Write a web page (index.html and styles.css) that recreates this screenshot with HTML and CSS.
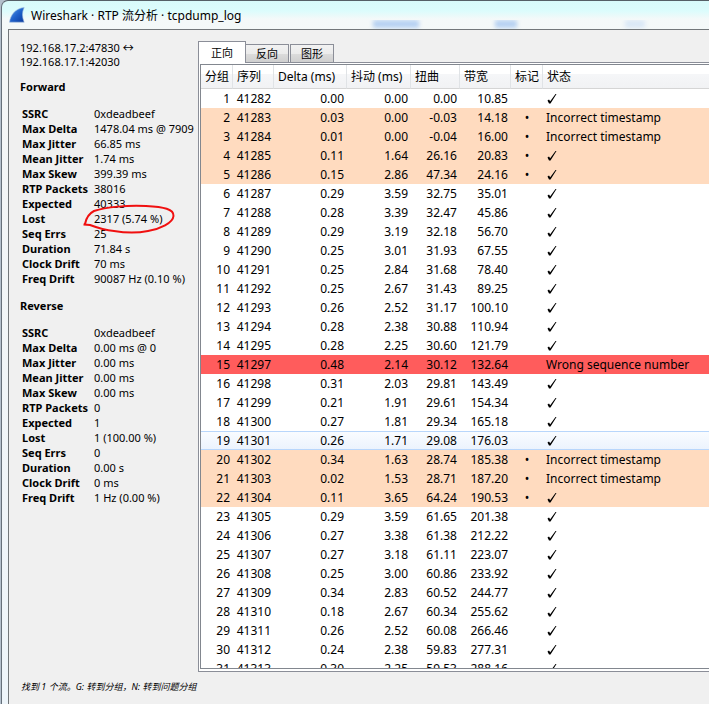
FILE: index.html
```html
<!DOCTYPE html>
<html lang="zh-CN">
<head>
<meta charset="utf-8">
<title>Wireshark · RTP 流分析 · tcpdump_log</title>
<link rel="stylesheet" href="styles.css">
</head>
<body>
<div class="window">
  <header class="titlebar">
    <svg class="fin" viewBox="0 0 16 16" aria-hidden="true">
      <defs><linearGradient id="fin" x1="0" y1="0" x2="1" y2="1"><stop offset="0" stop-color="#5aa6ea"/><stop offset=".5" stop-color="#1f62cc"/><stop offset="1" stop-color="#0a3a9c"/></linearGradient></defs>
      <path d="M.5 15.200C1.500 8 6 1.500 15.200.5C13 5 13 10 15.200 15.200Z" fill="url(#fin)" stroke="#a9c3e0" stroke-width=".6"/>
    </svg>
    <h1>Wireshark · RTP 流分析 · tcpdump_log</h1>
    <div class="ghosts" aria-hidden="true"><i></i><i></i><i></i></div>
  </header>
  <main class="client">
    <div class="panes">
      <aside class="stats">
        <p>192.168.17.2:47830 ↔<br>192.168.17.1:42030</p>
        <h2>Forward</h2>
        <table>
          <tr><th scope="row">SSRC</th><td>0xdeadbeef</td></tr>
          <tr><th scope="row">Max Delta</th><td>1478.04 ms @ 7909</td></tr>
          <tr><th scope="row">Max Jitter</th><td>66.85 ms</td></tr>
          <tr><th scope="row">Mean Jitter</th><td>1.74 ms</td></tr>
          <tr><th scope="row">Max Skew</th><td>399.39 ms</td></tr>
          <tr><th scope="row">RTP Packets</th><td>38016</td></tr>
          <tr><th scope="row">Expected</th><td>40333</td></tr>
          <tr><th scope="row">Lost</th><td class="marked">2317 (5.74 %)<svg class="ring" viewBox="0 0 100 40" aria-hidden="true"><path d="M3.500 25.500L10 26C18 29 24 31 34 32C46 34 58 34 68 32C80 30 93 24 93.500 17C94 10 84 8 66 7C48 6 26 8 14 12C8 15 6 20 5 25"/></svg></td></tr>
          <tr><th scope="row">Seq Errs</th><td>25</td></tr>
          <tr><th scope="row">Duration</th><td>71.84 s</td></tr>
          <tr><th scope="row">Clock Drift</th><td>70 ms</td></tr>
          <tr><th scope="row">Freq Drift</th><td>90087 Hz (0.10 %)</td></tr>
        </table>
        <h2>Reverse</h2>
        <table>
          <tr><th scope="row">SSRC</th><td>0xdeadbeef</td></tr>
          <tr><th scope="row">Max Delta</th><td>0.00 ms @ 0</td></tr>
          <tr><th scope="row">Max Jitter</th><td>0.00 ms</td></tr>
          <tr><th scope="row">Mean Jitter</th><td>0.00 ms</td></tr>
          <tr><th scope="row">Max Skew</th><td>0.00 ms</td></tr>
          <tr><th scope="row">RTP Packets</th><td>0</td></tr>
          <tr><th scope="row">Expected</th><td>1</td></tr>
          <tr><th scope="row">Lost</th><td>1 (100.00 %)</td></tr>
          <tr><th scope="row">Seq Errs</th><td>0</td></tr>
          <tr><th scope="row">Duration</th><td>0.00 s</td></tr>
          <tr><th scope="row">Clock Drift</th><td>0 ms</td></tr>
          <tr><th scope="row">Freq Drift</th><td>1 Hz (0.00 %)</td></tr>
        </table>
      </aside>
      <section class="tabs">
        <div class="tablist" role="tablist">
          <button class="tab active" role="tab" aria-selected="true">正向</button>
          <button class="tab" role="tab" aria-selected="false">反向</button>
          <button class="tab" role="tab" aria-selected="false">图形</button>
        </div>
        <div class="tabpanel" role="tabpanel">
          <div class="view">
            <table class="packets">
              <colgroup><col class="c-packet"><col class="c-seq"><col class="c-delta"><col class="c-jitter"><col class="c-skew"><col class="c-band"><col class="c-mark"><col></colgroup>
              <thead><tr><th>分组</th><th>序列</th><th>Delta (ms)</th><th>抖动 (ms)</th><th>扭曲</th><th>带宽</th><th>标记</th><th>状态</th></tr></thead>
              <tbody id="rows"></tbody>
            </table>
          </div>
        </div>
      </section>
    </div>
    <footer class="hint">找到 1 个流。G: 转到分组，N: 转到问题分组</footer>
  </main>
</div>
<script src="app.js"></script>
</body>
</html>
```
FILE: styles.css
```css
* { box-sizing: border-box; }
body {
  margin: 0;
  height: 100vh;
  background: #b4c0cc;
  color: #000;
  font: 12px/19px "Noto Sans", "Noto Sans CJK SC", sans-serif;
}
h1, h2, p { margin: 0; }
table { border-collapse: separate; border-spacing: 0; }
th, td { padding: 0; text-align: left; white-space: nowrap; }

.window {
  display: flex;
  flex-direction: column;
  height: 100%;
  margin-left: 1px;
  padding-left: 6px;
  border-top: 1px solid #555f66;
  border-left: 1px solid #66707a;
  border-top-left-radius: 7px;
  background: linear-gradient(#d8fafa, #dcfcfc 10px, #f4f9f9 18px, #f4f6f6 60px, #eef5fa);
}
.titlebar {
  display: flex;
  align-items: center;
  gap: 6px;
  height: 28px;
  flex: none;
  padding-left: 1px;
}
.titlebar h1 { font-size: 12px; font-weight: 400; white-space: nowrap; }
.fin { width: 16px; height: 16px; flex: none; }
.ghosts {
  display: grid;
  grid-template-columns: 2fr 1fr 1fr;
  flex: 1;
  align-self: flex-end;
  align-items: center;
  padding: 0 0 1px 126px;
  overflow: hidden;
}
.ghosts i { width: 46px; height: 8px; background: #8fb8ee; opacity: .6; filter: blur(2px); }
.ghosts i:nth-child(2) { width: 22px; margin-left: -46px; }
.ghosts i:nth-child(3) { width: 20px; opacity: .25; }

.client {
  display: flex;
  flex-direction: column;
  flex: 1;
  min-height: 0;
  border-top: 1px solid #72777a;
  border-left: 1px solid #72777a;
  background: #f0f0f0;
}
.panes {
  display: grid;
  grid-template-columns: 177px minmax(0, 1fr);
  gap: 12px;
  flex: 1;
  min-height: 0;
  padding-top: 11px;
}

.stats { padding-left: 11px; font-size: 11px; line-height: 14px; }
.stats h2 { margin: 11px 0 12px; font-size: 11px; line-height: 14px; }
.stats table + h2 { margin-top: 13px; }
.stats table { margin-left: 2px; table-layout: fixed; width: 100%; }
.stats th { width: 72px; }
.stats th, .stats td { height: 15px; line-height: 15px; }
.marked { position: relative; }
.ring {
  position: absolute;
  left: -14px;
  top: -12px;
  width: 100px;
  height: 40px;
  fill: none;
  stroke: #f01010;
  stroke-width: 2;
}

.tabs { display: flex; flex-direction: column; min-height: 0; }
.tablist { display: flex; align-items: flex-end; height: 21px; flex: none; }
.tab {
  height: 18px;
  padding: 0 10px;
  border: 1px solid #8b8e98;
  border-bottom: 0;
  background: linear-gradient(#f2f2f2, #ebebeb 50%, #dcdcdc 51%, #cfcfcf);
  font: 11px/16px "Noto Sans", "Noto Sans CJK SC", sans-serif;
}
.tab:last-child { margin-left: 1px; }
.tab.active {
  position: relative;
  height: 22px;
  margin: 0 -1px -1px 0;
  padding: 0 12px;
  background: #fff;
}
.tabpanel {
  display: flex;
  flex: 1;
  min-height: 0;
  padding: 1px 0 2px 1px;
  border: 1px solid #8b8e98;
  border-right: 0;
  background: #fff;
}
.view {
  flex: 1;
  min-width: 0;
  overflow: hidden;
  border: 1px solid #82878f;
  border-right: 0;
}
.packets { width: 100%; table-layout: fixed; }
.c-packet, .c-mark { width: 32px; }
.c-seq { width: 41px; }
.c-delta { width: 73px; }
.c-jitter { width: 64px; }
.c-skew { width: 49px; }
.c-band { width: 51px; }
.packets th {
  height: 24px;
  padding-left: 4px;
  border-right: 1px solid #e0e3e6;
  border-bottom: 1px solid #d5d5d5;
  background: linear-gradient(#fff 40%, #f5f6f8 41%, #f1f2f4);
  font-weight: 400;
}
.packets th:last-child { border-right: 0; }
.packets td { height: 19px; padding: 0 3px; text-align: right; }
.packets td:nth-child(7) { text-align: center; }
.packets td:nth-child(8) { text-align: left; }
.warn td { background: #ffdbbf; }
.error td { background: #ff5c5c; }
.hover td {
  background: linear-gradient(#fafcff, #ebf3fd);
  box-shadow: inset 0 1px #b8d6fb, inset 0 -1px #b8d6fb;
}
.check { display: block; width: 12px; height: 11px; fill: #000; }
.hint {
  flex: none;
  padding: 5px 12px 8px;
  font-size: 9px;
  font-style: italic;
}
```
FILE: app.js
```js
const packets = `1 41282 0.00 0.00 0.00 10.85
2 41283 0.03 0.00 -0.03 14.18 t
3 41284 0.01 0.00 -0.04 16.00 t
4 41285 0.11 1.64 26.16 20.83 m
5 41286 0.15 2.86 47.34 24.16 m
6 41287 0.29 3.59 32.75 35.01
7 41288 0.28 3.39 32.47 45.86
8 41289 0.29 3.19 32.18 56.70
9 41290 0.25 3.01 31.93 67.55
10 41291 0.25 2.84 31.68 78.40
11 41292 0.25 2.67 31.43 89.25
12 41293 0.26 2.52 31.17 100.10
13 41294 0.28 2.38 30.88 110.94
14 41295 0.28 2.25 30.60 121.79
15 41297 0.48 2.14 30.12 132.64 s
16 41298 0.31 2.03 29.81 143.49
17 41299 0.21 1.91 29.61 154.34
18 41300 0.27 1.81 29.34 165.18
19 41301 0.26 1.71 29.08 176.03 h
20 41302 0.34 1.63 28.74 185.38 t
21 41303 0.02 1.53 28.71 187.20 t
22 41304 0.11 3.65 64.24 190.53 m
23 41305 0.29 3.59 61.65 201.38
24 41306 0.27 3.38 61.38 212.22
25 41307 0.27 3.18 61.11 223.07
26 41308 0.25 3.00 60.86 233.92
27 41309 0.34 2.83 60.52 244.77
28 41310 0.18 2.67 60.34 255.62
29 41311 0.26 2.52 60.08 266.46
30 41312 0.24 2.38 59.83 277.31
31 41313 0.30 2.25 59.53 288.16`;
const check = '<svg class="check" viewBox="0 0 12 11" role="img" aria-label="OK"><path d="M1.500 7.500L3 6.500L4.200 8.200L9.500 1H10.500L4.500 10.500L3 10.500Z"/></svg>';
const status = { t: 'Incorrect timestamp', s: 'Wrong sequence number' };
const rowClass = { t: 'warn', m: 'warn', s: 'error', h: 'hover' };

document.getElementById('rows').innerHTML = packets.split('\n').map(line => {
  const f = line.split(' ');
  const kind = f[6];
  const mark = kind === 't' || kind === 'm' ? '•' : '';
  const cells = f.slice(0, 6).concat(mark, status[kind] || check);
  return `<tr class="${rowClass[kind] || ''}">${cells.map(c => `<td>${c}</td>`).join('')}</tr>`;
}).join('');
```
